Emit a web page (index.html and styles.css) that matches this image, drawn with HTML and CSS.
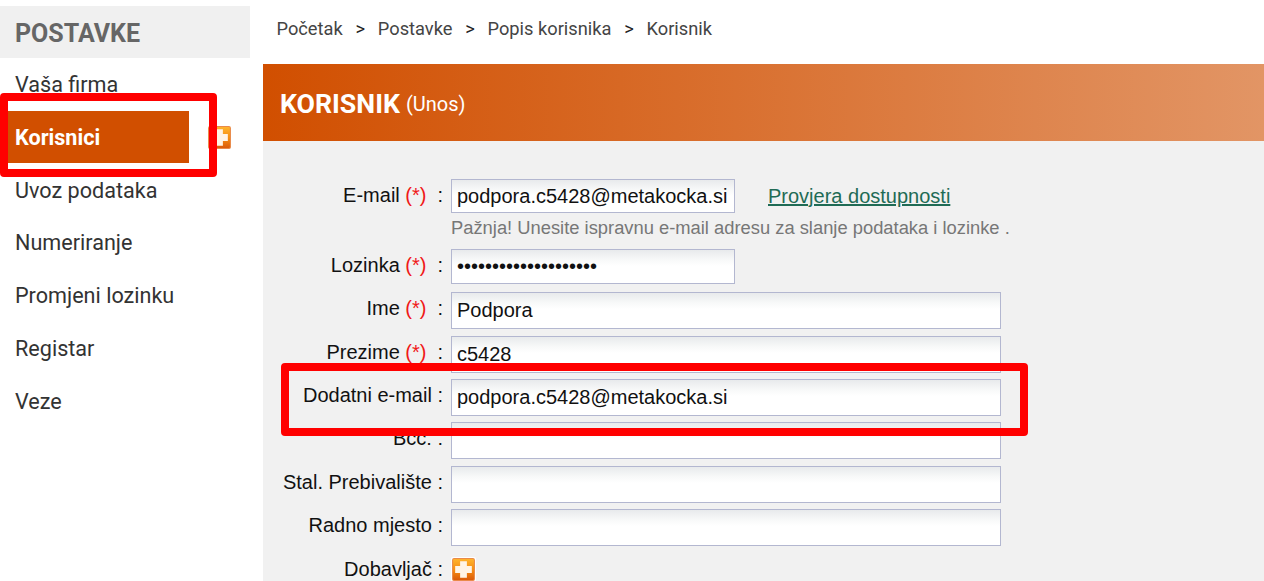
FILE: index.html
```html
<!DOCTYPE html>
<html lang="hr">
<head>
<meta charset="utf-8">
<title>Korisnik</title>
<link rel="stylesheet" href="styles.css">
</head>
<body>
<div class="page">
  <aside class="sidebar">
    <h2 class="side-title">POSTAVKE</h2>
    <nav class="side-nav">
      <a class="side-link">Vaša firma</a>
      <div class="side-row">
        <a class="side-link active">Korisnici</a>
        <svg class="plus plus-side" viewBox="0 0 24 24"><use href="#plus-icon"/></svg>
      </div>
      <a class="side-link">Uvoz podataka</a>
      <a class="side-link">Numeriranje</a>
      <a class="side-link">Promjeni lozinku</a>
      <a class="side-link">Registar</a>
      <a class="side-link">Veze</a>
    </nav>
  </aside>
  <main class="main">
    <div class="crumbs">
      <span>Početak</span><span class="sep">&gt;</span><span>Postavke</span><span class="sep">&gt;</span><span>Popis korisnika</span><span class="sep">&gt;</span><span>Korisnik</span>
    </div>
    <header class="band"><strong class="band-title">KORISNIK</strong> <span class="band-sub">(Unos)</span></header>
    <form class="form">
      <div class="row row-first">
        <label class="lbl">E-mail <em>(*)</em><span class="colon-gap">:</span></label>
        <div class="fld fld-inline">
          <div class="inp inp-short inp-email">podpora.c5428@metakocka.si</div>
          <a class="check">Provjera dostupnosti</a>
        </div>
      </div>
      <div class="hint">Pažnja! Unesite ispravnu e-mail adresu za slanje podataka i lozinke .</div>
      <div class="row row-pass">
        <label class="lbl">Lozinka <em>(*)</em><span class="colon-gap">:</span></label>
        <div class="inp inp-short inp-pass">••••••••••••••••••••</div>
      </div>
      <div class="row">
        <label class="lbl">Ime <em>(*)</em><span class="colon-gap">:</span></label>
        <div class="inp">Podpora</div>
      </div>
      <div class="row">
        <label class="lbl">Prezime <em>(*)</em><span class="colon-gap">:</span></label>
        <div class="inp">c5428</div>
      </div>
      <div class="row">
        <label class="lbl">Dodatni e-mail :</label>
        <div class="inp">podpora.c5428@metakocka.si</div>
      </div>
      <div class="row">
        <label class="lbl">Bcc: :</label>
        <div class="inp"></div>
      </div>
      <div class="row">
        <label class="lbl">Stal. Prebivalište :</label>
        <div class="inp"></div>
      </div>
      <div class="row">
        <label class="lbl">Radno mjesto :</label>
        <div class="inp"></div>
      </div>
      <div class="row">
        <label class="lbl">Dobavljač :</label>
        <svg class="plus" viewBox="0 0 24 24"><use href="#plus-icon"/></svg>
      </div>
    </form>
  </main>
</div>
<div class="mark mark-nav"></div>
<div class="mark mark-field"></div>
<svg class="defs" width="0" height="0">
  <defs>
    <linearGradient id="plus-grad" x1="0" y1="0" x2="0" y2="1">
      <stop offset="0" stop-color="#ffb52e"/>
      <stop offset="0.55" stop-color="#f58a10"/>
      <stop offset="1" stop-color="#d9580a"/>
    </linearGradient>
    <symbol id="plus-icon" viewBox="0 0 24 24">
      <rect x="0" y="0" width="24" height="24" rx="2" fill="#fff"/>
      <rect x="1.5" y="1.5" width="21" height="21" rx="1.5" fill="url(#plus-grad)" stroke="#e98a4a" stroke-width="1"/>
      <path d="M8.75 4h6.5v4.75H20v6.5h-4.75V20h-6.5v-4.75H4v-6.5h4.75z" fill="#fff4e6"/>
    </symbol>
  </defs>
</svg>
</body>
</html>
```
FILE: styles.css
```css
* { box-sizing: border-box; }
html, body { margin: 0; padding: 0; height: 100%; overflow: hidden; background: #fff; }
body { position: relative; font-family: "Liberation Sans", Arial, sans-serif; color: #111; }

.page { display: flex; height: 581px; }

.sidebar { width: 250px; flex: none; padding-top: 6px; font-family: Roboto, sans-serif; }
.side-title { margin: 0; height: 52px; padding-left: 15px; line-height: 56px; font-size: 25px; font-weight: 700; color: #666; background: #f0f0f0; }
.side-nav { display: flex; flex-direction: column; }
.side-link { display: block; height: 52.75px; padding-left: 15px; line-height: 53px; font-size: 21.6px; color: #333; }
.side-row { display: flex; align-items: center; height: 52.75px; }
.side-row .active { width: 189px; height: 52px; flex: none; background: #d14f00; color: #fff; font-weight: 700; line-height: 53px; }
.plus { display: block; width: 25px; height: 25px; flex: none; }
.plus-side { margin-left: 18px; }

.main { flex: 1; margin-left: 13px; min-width: 0; }
.crumbs { display: flex; height: 58px; align-items: center; padding-left: 13.5px; padding-bottom: 2px; font-family: Roboto, sans-serif; font-size: 18.25px; color: #444; }
.sep { margin: 0 12.8px; color: #222; }
.band { height: 77px; margin-top: 6px; padding-left: 17px; line-height: 81px; color: #fff; font-family: Roboto, sans-serif; background: linear-gradient(90deg, #d14f00, #e29565); }
.band-title { font-size: 26.7px; }
.band-sub { display: inline-block; margin-left: 2px; font-size: 20px; vertical-align: 2px; }

.form { height: 440px; padding-top: 38px; background: #f1f1f1; }
.row { display: flex; align-items: flex-start; height: 43.45px; }
.row-first { height: 34px; }
.row-pass { height: 43.1px; }
.lbl { width: 180px; flex: none; text-align: right; font-size: 20px; line-height: 32px; color: #111; }
.lbl em { font-style: normal; color: #f01818; }
.colon-gap { margin-left: 11px; }
.fld { flex: 1; }
.fld-inline { display: flex; align-items: center; }
.inp { margin-left: 8px; width: 550px; height: 37px; padding: 0 5px; border: 1px solid #b3b7d0; font-size: 20px; line-height: 35px; color: #111; overflow: hidden; white-space: nowrap;
  background: linear-gradient(180deg, #e8eaec 0, #f8f9f9 10px, #fff 16px); }
.inp-short { width: 284px; }
.inp-email { height: 34px; line-height: 32px; flex: none; }
.inp-pass { height: 35px; line-height: 33px; font-size: 20px; letter-spacing: 0; }
.check { margin-left: 33px; font-size: 20px; color: #1f6b55; text-decoration: underline; }
.hint { height: 36px; padding-left: 188px; padding-top: 3px; font-size: 18.35px; line-height: 24px; color: #777; }
.row .plus { margin: 4px 0 0 8px; }

.mark { position: absolute; border: 8px solid #f00; border-radius: 4px; pointer-events: none; }
.mark-nav { left: 0; top: 93px; width: 217px; height: 84px; }
.mark-field { left: 281px; top: 363px; width: 747px; height: 73px; }
.defs { position: absolute; }
```
